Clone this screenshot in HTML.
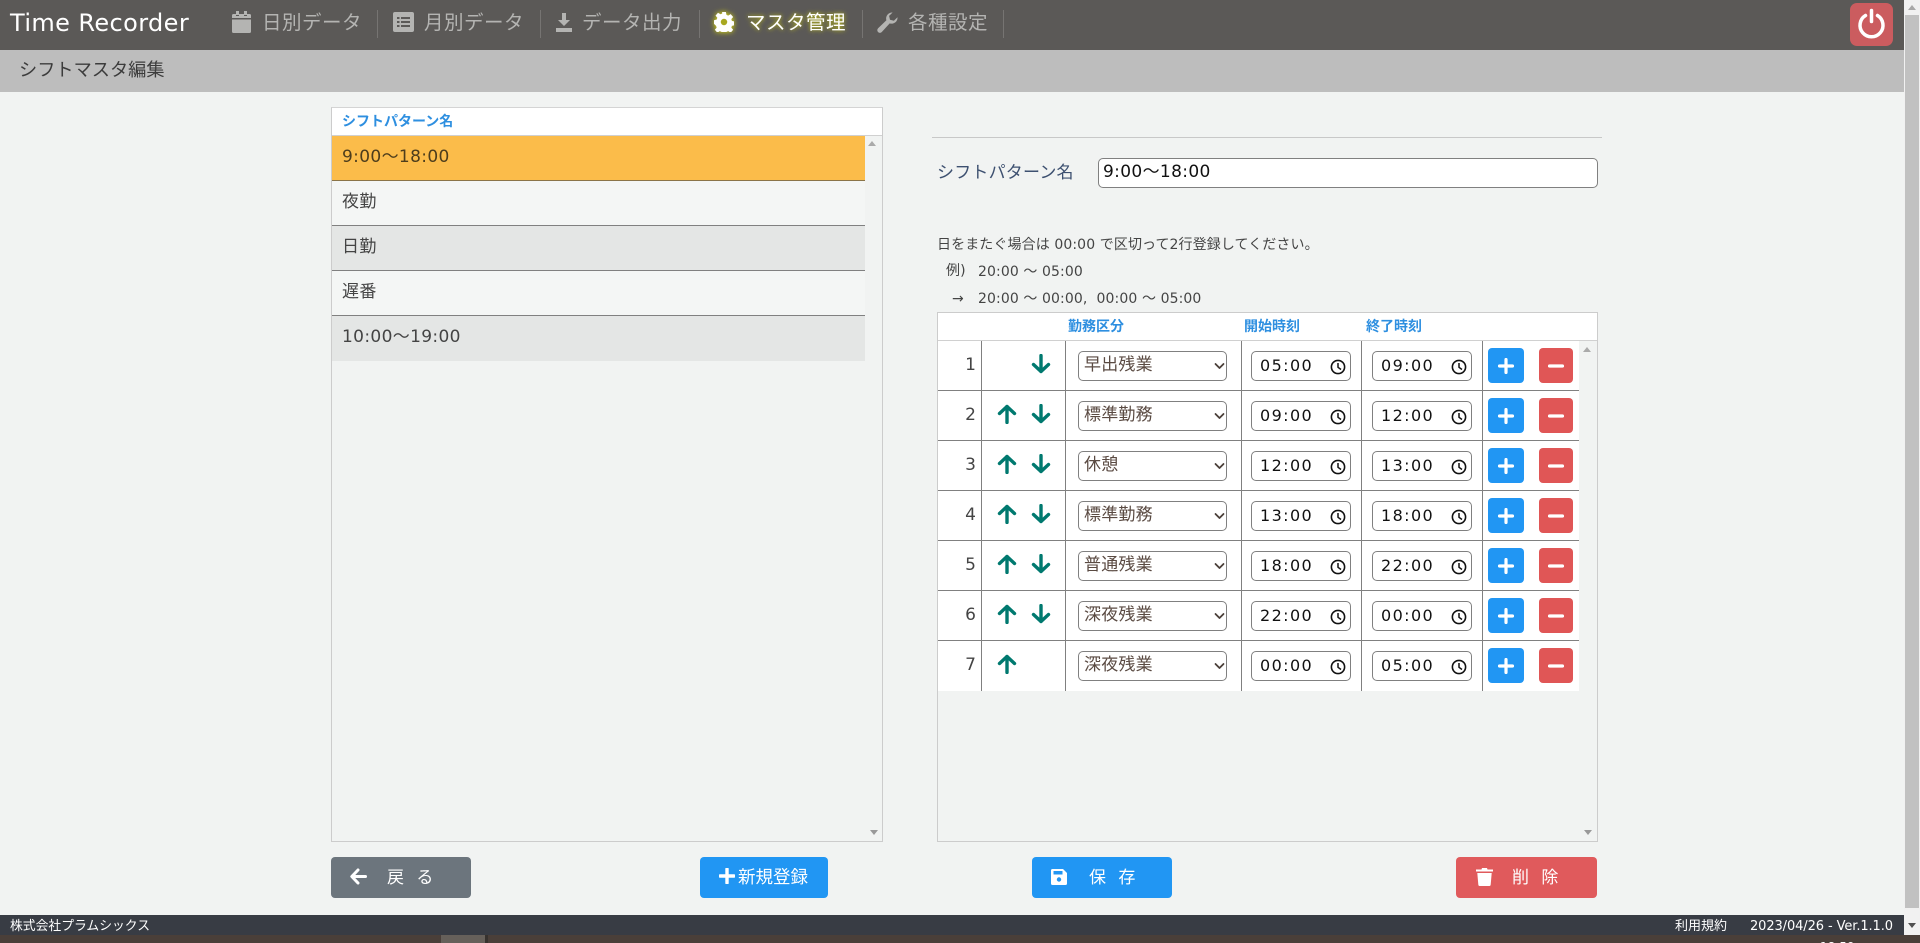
<!DOCTYPE html>
<html lang="ja"><head><meta charset="utf-8"><title>Time Recorder</title>
<style>
*{box-sizing:border-box;margin:0;padding:0}
html,body{width:1920px;height:943px;overflow:hidden;background:#f1f3f2;font-family:"DejaVu Sans","Noto Sans CJK JP",sans-serif;color:#444}
.a{position:absolute;white-space:nowrap}
#hd{left:0;top:0;width:1904px;height:50px;background:#5b5957}
#sub{left:0;top:50px;width:1904px;height:42px;background:#bdbdbd}
.nv{top:9px;font-size:19.500px;line-height:28px;color:#b4b4b2;letter-spacing:.5px}
.sp{top:10px;width:1px;height:28px;background:#767472}
.on{color:#fff;text-shadow:0 0 5px rgba(225,225,0,.85)}
.lst{left:331px;top:107px;width:552px;height:735px;border:1px solid #ccc;border-top:1px solid #d4d4d4}
.th{font-size:14px;font-weight:700;color:#2e8fe0;line-height:18px}
.li{left:332px;width:533px;height:45px;font-size:17px;line-height:42px;padding-left:10px;border-bottom:1px solid #808080;color:#444;letter-spacing:.35px}
.r{position:absolute;left:938px;width:641px;height:50px;background:#fff;border-bottom:1px solid #808080}
.v{position:absolute;top:0;width:1px;height:50px;background:#808080}
.n{position:absolute;left:0;width:38px;top:0;text-align:right;font-size:17px;line-height:48px;color:#444}
.s,.t{position:absolute;top:10px;height:30px;border:1px solid #808080;border-radius:5px;background:#fff;font-size:16px;line-height:27px;letter-spacing:1px}
.s{left:140px;width:149px;padding-left:5px;color:#5a4a42;font-size:17px;letter-spacing:.2px}
.t{width:100px;padding-left:8px;color:#111;letter-spacing:1.4px}
.t1{left:313px}.t2{left:434px}
.s svg{position:absolute;left:135px;top:10px}
.t svg{position:absolute;left:78px;top:7px}
.up,.dn{position:absolute;top:13px}
.up{left:59px}.dn{left:93px}
.p,.m{position:absolute;top:7px;height:35px;border-radius:4px}
.p{left:550px;width:36px;background:#2196f3}
.m{left:601px;width:34px;background:#e05656}
.p svg,.m svg{position:absolute;left:50%;top:50%;transform:translate(-50%,-50%)}
.b{top:857px;height:41px;border-radius:4px;color:#fff;font-size:17px;line-height:42px}
.tri{width:0;height:0;border-left:4px solid transparent;border-right:4px solid transparent}
.tu{border-bottom:5px solid #aaa}.td{border-top:5px solid #999}
#ft{left:0;top:915px;width:1904px;height:20px;background:#383c44}
.nt{font-size:14px;line-height:18px;color:#444;letter-spacing:.1px}
.f{top:915px;font-size:13px;line-height:24px;color:#fff}
</style></head><body>
<svg width="0" height="0" style="position:absolute">
<defs>
<symbol id="up" viewBox="0 0 20 20"><path d="M10 18.500V2.500M2.500 9.500L10 2.500l7.500 7" fill="none" stroke="#00796f" stroke-width="3.400" stroke-linecap="round" stroke-linejoin="round"/></symbol>
<symbol id="dn" viewBox="0 0 20 20"><path d="M10 1.500V17.500M2.500 10.500L10 17.500l7.500-7" fill="none" stroke="#00796f" stroke-width="3.400" stroke-linecap="round" stroke-linejoin="round"/></symbol>
<symbol id="chev" viewBox="0 0 10 8"><path d="M1 2l4 4 4-4" fill="none" stroke="#4a3f39" stroke-width="1.800" stroke-linecap="round" stroke-linejoin="round"/></symbol>
<symbol id="clk" viewBox="0 0 16 16"><circle cx="8" cy="8" r="6.600" fill="none" stroke="#111" stroke-width="1.600"/><path d="M8 4v4.300l3 2.200" fill="none" stroke="#111" stroke-width="1.500"/></symbol>
<symbol id="plus" viewBox="0 0 16 16"><path d="M8 1.500v13M1.500 8h13" stroke="#fff" stroke-width="3.200" stroke-linecap="round"/></symbol>
<symbol id="minus" viewBox="0 0 16 16"><path d="M1.500 8h13" stroke="#fff" stroke-width="3.200" stroke-linecap="round"/></symbol>
</defs></svg>

<div class="a" id="hd"></div>
<div class="a" style="left:10px;top:7px;font-size:24px;line-height:32px;color:#fff;letter-spacing:.4px">Time Recorder</div>

<svg class="a" style="left:232px;top:11px" width="19" height="22" viewBox="0 0 19 22"><path d="M4 0h3v4H4zM12 0h3v4h-3zM1.500 3H4v2h3V3h5v2h3V3h2.500A1.500 1.500 0 0 1 19 4.500V7H0V4.500A1.500 1.500 0 0 1 1.500 3zM0 8.500h19v12a1.500 1.500 0 0 1-1.500 1.500h-16A1.500 1.500 0 0 1 0 20.500z" fill="#b4b4b2"/></svg>
<div class="a nv" style="left:262px">日別データ</div><div class="a sp" style="left:377px"></div>
<svg class="a" style="left:393px;top:12px" width="21" height="20" viewBox="0 0 21 20"><rect width="21" height="20" rx="2" fill="#b4b4b2"/><path d="M4 5h2.500v2H4zM8 5h9v2H8zM4 9h2.500v2H4zM8 9h9v2H8zM4 13h2.500v2H4zM8 13h9v2H8z" fill="#5b5957"/></svg>
<div class="a nv" style="left:424px">月別データ</div><div class="a sp" style="left:540px"></div>
<svg class="a" style="left:556px;top:13px" width="16" height="19" viewBox="0 0 16 19"><path d="M6 0h4v7h4l-6 6-6-6h4zM0 15h16v4H0z" fill="#b4b4b2"/></svg>
<div class="a nv" style="left:582px">データ出力</div><div class="a sp" style="left:699px"></div>
<svg class="a" style="left:714px;top:12px;filter:drop-shadow(0 0 3px #e8e800)" width="20" height="20" viewBox="0 0 21 21"><path d="M8.500 0h4l.6 3 1.800.8 2.600-1.600 2.600 3-1.900 2.300.6 1.800 2.900.7v3.900l-2.900.7-.6 1.800 1.900 2.300-2.600 3-2.600-1.600-1.800.8-.6 3h-4l-.6-3-1.800-.8-2.600 1.600-2.600-3 1.900-2.300-.6-1.800L0 12.500V8.600l2.900-.7.600-1.800-1.900-2.300 2.600-3 2.600 1.600 1.800-.8z" fill="#fff"/><circle cx="10.500" cy="10.500" r="3.400" fill="#a8a820"/></svg>
<div class="a nv on" style="left:746px">マスタ管理</div><div class="a sp" style="left:862px"></div>
<svg class="a" style="left:877px;top:12px" width="21" height="21" viewBox="0 0 21 21"><path d="M20.500 5.200a6 6 0 0 1-7.800 6.200L4.800 20a2.600 2.600 0 0 1-3.800-3.600l8.400-8.100A6 6 0 0 1 15.600.5l-3.500 3.400.9 3.900 3.900.9z" fill="#b4b4b2"/></svg>
<div class="a nv" style="left:908px">各種設定</div><div class="a sp" style="left:1003px"></div>

<div class="a" style="left:1850px;top:3px;width:43px;height:43px;border-radius:7px;background:#cb5c5f"></div>
<svg class="a" style="left:1856px;top:8px" width="31" height="31" viewBox="0 0 31 31"><path d="M9.500 7.500a11.500 11.500 0 1 0 12 0" fill="none" stroke="#fff" stroke-width="3.500" stroke-linecap="round"/><path d="M15.500 2.500v11" stroke="#fff" stroke-width="3.500" stroke-linecap="round"/></svg>

<div class="a" id="sub"></div>
<div class="a" style="left:19px;top:57px;font-size:18.200px;line-height:28px;color:#3c3c3c">シフトマスタ編集</div>

<!-- left list -->
<div class="a lst"></div>
<div class="a" style="left:332px;top:108px;width:550px;height:28px;background:#fff;border-bottom:1px solid #d0d0d0"></div>
<div class="a th" style="left:342px;top:113px">シフトパターン名</div>
<div class="a li" style="top:136px;background:#fbbc4a;border-bottom-color:#8a7448;color:#4d3d1c">9:00～18:00</div>
<div class="a li" style="top:181px;background:#f4f6f5">夜勤</div>
<div class="a li" style="top:226px;background:#e4e6e5">日勤</div>
<div class="a li" style="top:271px;background:#f4f6f5">遅番</div>
<div class="a li" style="top:316px;background:#e4e6e5;border-bottom:none;height:45px">10:00～19:00</div>
<div class="a tri tu" style="left:868px;top:141px"></div>
<div class="a tri td" style="left:870px;top:830px"></div>

<!-- right -->
<div class="a" style="left:932px;top:137px;width:670px;height:1px;background:#c8c8c8"></div>
<div class="a" style="left:937px;top:158px;font-size:17px;line-height:30px;color:#3d5070;letter-spacing:.2px">シフトパターン名</div>
<div class="a" style="left:1098px;top:158px;width:500px;height:30px;border:1px solid #808080;border-radius:5px;background:#fff;padding-left:4px;font-size:17px;line-height:26px;color:#111;letter-spacing:.35px">9:00～18:00</div>

<div class="a nt" style="left:937px;top:236px">日をまたぐ場合は 00:00 で区切って2行登録してください。</div>
<div class="a nt" style="left:946px;top:262px">例)</div>
<div class="a nt" style="left:978px;top:263px">20:00 ～ 05:00</div>
<div class="a nt" style="left:952px;top:290px">→</div>
<div class="a nt" style="left:978px;top:290px">20:00 ～ 00:00,&nbsp; 00:00 ～ 05:00</div>

<div class="a" style="left:937px;top:312px;width:661px;height:530px;border:1px solid #ccc"></div>
<div class="a" style="left:938px;top:313px;width:659px;height:28px;background:#fff;border-bottom:1px solid #d0d0d0"></div>
<div class="a th" style="left:1068px;top:318px">勤務区分</div>
<div class="a th" style="left:1244px;top:318px">開始時刻</div>
<div class="a th" style="left:1366px;top:318px">終了時刻</div>
<div class="a tri tu" style="left:1583px;top:347px"></div>
<div class="a tri td" style="left:1584px;top:830px"></div>

<div class="r" style="top:341px"><div class="v" style="left:43px"></div><div class="v" style="left:127px"></div><div class="v" style="left:303px"></div><div class="v" style="left:423px"></div><div class="v" style="left:544px"></div>
<div class="n">1</div><svg class="dn" width="20" height="20"><use href="#dn"/></svg>
<div class="s">早出残業<svg width="11" height="8"><use href="#chev"/></svg></div>
<div class="t t1">05:00<svg width="16" height="16"><use href="#clk"/></svg></div><div class="t t2">09:00<svg width="16" height="16"><use href="#clk"/></svg></div>
<div class="p"><svg width="16" height="16"><use href="#plus"/></svg></div><div class="m"><svg width="16" height="16"><use href="#minus"/></svg></div></div>

<div class="r" style="top:391px"><div class="v" style="left:43px"></div><div class="v" style="left:127px"></div><div class="v" style="left:303px"></div><div class="v" style="left:423px"></div><div class="v" style="left:544px"></div>
<div class="n">2</div><svg class="up" width="20" height="20"><use href="#up"/></svg><svg class="dn" width="20" height="20"><use href="#dn"/></svg>
<div class="s">標準勤務<svg width="11" height="8"><use href="#chev"/></svg></div>
<div class="t t1">09:00<svg width="16" height="16"><use href="#clk"/></svg></div><div class="t t2">12:00<svg width="16" height="16"><use href="#clk"/></svg></div>
<div class="p"><svg width="16" height="16"><use href="#plus"/></svg></div><div class="m"><svg width="16" height="16"><use href="#minus"/></svg></div></div>

<div class="r" style="top:441px"><div class="v" style="left:43px"></div><div class="v" style="left:127px"></div><div class="v" style="left:303px"></div><div class="v" style="left:423px"></div><div class="v" style="left:544px"></div>
<div class="n">3</div><svg class="up" width="20" height="20"><use href="#up"/></svg><svg class="dn" width="20" height="20"><use href="#dn"/></svg>
<div class="s">休憩<svg width="11" height="8"><use href="#chev"/></svg></div>
<div class="t t1">12:00<svg width="16" height="16"><use href="#clk"/></svg></div><div class="t t2">13:00<svg width="16" height="16"><use href="#clk"/></svg></div>
<div class="p"><svg width="16" height="16"><use href="#plus"/></svg></div><div class="m"><svg width="16" height="16"><use href="#minus"/></svg></div></div>

<div class="r" style="top:491px"><div class="v" style="left:43px"></div><div class="v" style="left:127px"></div><div class="v" style="left:303px"></div><div class="v" style="left:423px"></div><div class="v" style="left:544px"></div>
<div class="n">4</div><svg class="up" width="20" height="20"><use href="#up"/></svg><svg class="dn" width="20" height="20"><use href="#dn"/></svg>
<div class="s">標準勤務<svg width="11" height="8"><use href="#chev"/></svg></div>
<div class="t t1">13:00<svg width="16" height="16"><use href="#clk"/></svg></div><div class="t t2">18:00<svg width="16" height="16"><use href="#clk"/></svg></div>
<div class="p"><svg width="16" height="16"><use href="#plus"/></svg></div><div class="m"><svg width="16" height="16"><use href="#minus"/></svg></div></div>

<div class="r" style="top:541px"><div class="v" style="left:43px"></div><div class="v" style="left:127px"></div><div class="v" style="left:303px"></div><div class="v" style="left:423px"></div><div class="v" style="left:544px"></div>
<div class="n">5</div><svg class="up" width="20" height="20"><use href="#up"/></svg><svg class="dn" width="20" height="20"><use href="#dn"/></svg>
<div class="s">普通残業<svg width="11" height="8"><use href="#chev"/></svg></div>
<div class="t t1">18:00<svg width="16" height="16"><use href="#clk"/></svg></div><div class="t t2">22:00<svg width="16" height="16"><use href="#clk"/></svg></div>
<div class="p"><svg width="16" height="16"><use href="#plus"/></svg></div><div class="m"><svg width="16" height="16"><use href="#minus"/></svg></div></div>

<div class="r" style="top:591px"><div class="v" style="left:43px"></div><div class="v" style="left:127px"></div><div class="v" style="left:303px"></div><div class="v" style="left:423px"></div><div class="v" style="left:544px"></div>
<div class="n">6</div><svg class="up" width="20" height="20"><use href="#up"/></svg><svg class="dn" width="20" height="20"><use href="#dn"/></svg>
<div class="s">深夜残業<svg width="11" height="8"><use href="#chev"/></svg></div>
<div class="t t1">22:00<svg width="16" height="16"><use href="#clk"/></svg></div><div class="t t2">00:00<svg width="16" height="16"><use href="#clk"/></svg></div>
<div class="p"><svg width="16" height="16"><use href="#plus"/></svg></div><div class="m"><svg width="16" height="16"><use href="#minus"/></svg></div></div>

<div class="r" style="top:641px;border-bottom:none"><div class="v" style="left:43px"></div><div class="v" style="left:127px"></div><div class="v" style="left:303px"></div><div class="v" style="left:423px"></div><div class="v" style="left:544px"></div>
<div class="n">7</div><svg class="up" width="20" height="20"><use href="#up"/></svg>
<div class="s">深夜残業<svg width="11" height="8"><use href="#chev"/></svg></div>
<div class="t t1">00:00<svg width="16" height="16"><use href="#clk"/></svg></div><div class="t t2">05:00<svg width="16" height="16"><use href="#clk"/></svg></div>
<div class="p"><svg width="16" height="16"><use href="#plus"/></svg></div><div class="m"><svg width="16" height="16"><use href="#minus"/></svg></div></div>

<!-- buttons -->
<div class="a b" style="left:331px;width:140px;background:#6c757d"></div>
<svg class="a" style="left:350px;top:868px" width="17" height="17" viewBox="0 0 17 17"><path d="M15.500 8.500H2M8 2L1.800 8.500 8 15" fill="none" stroke="#fff" stroke-width="3" stroke-linecap="round" stroke-linejoin="round"/></svg>
<div class="a b" style="left:387px;letter-spacing:3.500px">戻 る</div>
<div class="a b" style="left:700px;width:128px;background:#2196f3"></div>
<svg class="a" style="left:719px;top:868px" width="16" height="16" viewBox="0 0 16 16"><path d="M8 1v14M1 8h14" stroke="#fff" stroke-width="3.400" stroke-linecap="round"/></svg>
<div class="a b" style="left:738px;font-size:17.500px">新規登録</div>
<div class="a b" style="left:1032px;width:140px;background:#2196f3"></div>
<svg class="a" style="left:1051px;top:869px" width="16" height="16" viewBox="0 0 16 16"><path d="M1.500 0H12l4 4v10.500a1.500 1.500 0 0 1-1.500 1.500h-13A1.500 1.500 0 0 1 0 14.500v-13A1.500 1.500 0 0 1 1.500 0z" fill="#fff"/><rect x="2.500" y="2" width="9" height="3.500" fill="#2196f3"/><circle cx="8" cy="10.500" r="2.200" fill="#2196f3"/></svg>
<div class="a b" style="left:1089px;letter-spacing:3.500px">保 存</div>
<div class="a b" style="left:1456px;width:141px;background:#e05a5c"></div>
<svg class="a" style="left:1476px;top:868px" width="17" height="18" viewBox="0 0 17 18"><path d="M5.500 1.500L6 0h5l.5 1.500H17V3.500H0V1.500zM1.300 5h14.400l-1 11.500A1.600 1.600 0 0 1 13 18H4a1.600 1.600 0 0 1-1.700-1.500z" fill="#fff"/></svg>
<div class="a b" style="left:1512px;letter-spacing:3.500px">削 除</div>

<!-- footer -->
<div class="a" id="ft"></div>
<div class="a f" style="left:10px;font-size:12.800px">株式会社プラムシックス</div>
<div class="a f" style="left:1675px">利用規約</div>
<div class="a f" style="left:1750px;letter-spacing:-.1px">2023/04/26 - Ver.1.1.0</div>

<div class="a" style="left:0;top:935px;width:1920px;height:8px;background:#4a3f39;overflow:hidden">
<div class="a" style="left:441px;top:0;width:44px;height:8px;background:#66605a"></div>
<div class="a" style="left:485px;top:0;width:3px;height:8px;background:#37322e"></div>
<div class="a" style="left:1820px;top:5px;font-size:12px;line-height:14px;color:#fff">18:59</div>
</div>

<!-- page scrollbar -->
<div class="a" style="left:1904px;top:0;width:16px;height:935px;background:#f1f1f1"></div>
<div class="a" style="left:1905px;top:15px;width:14px;height:893px;background:#c1c1c1"></div>
<div class="a tri" style="left:1908px;top:5px;border-bottom:5px solid #a8a8a8"></div>
<div class="a tri" style="left:1908px;top:923px;border-top:5px solid #505050"></div>
</body></html>
